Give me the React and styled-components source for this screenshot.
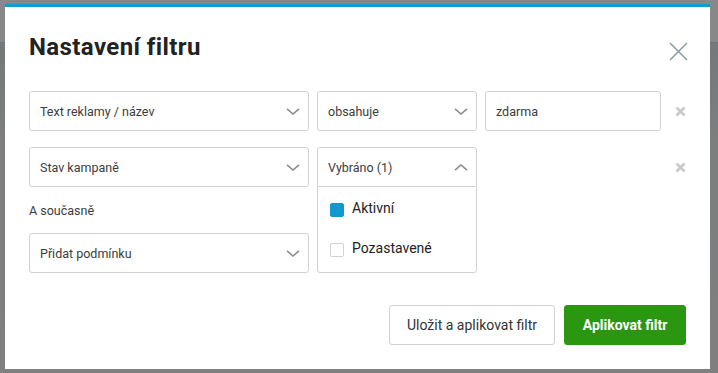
import React from 'react'
import styled, { createGlobalStyle } from 'styled-components'

const GlobalStyle = createGlobalStyle`
  html, body {
    margin: 0;
    padding: 0;
  }
  body {
    width: 718px;
    height: 373px;
    overflow: hidden;
    font-family: Roboto, "Liberation Sans", Arial, sans-serif;
    background: linear-gradient(
      to bottom,
      #888888 0px,
      #888888 42px,
      #6f7376 42px,
      #6f7376 43px,
      #75797b 43px,
      #7c7e80 140px,
      #7f7f7f 373px
    );
  }
`;

const Backdrop = styled.div`
  padding: 4px 8px 4px 5px;
  height: 373px;
  box-sizing: border-box;
`;

const Modal = styled.div`
  width: 705px;
  height: 365px;
  box-sizing: border-box;
  background: #fff;
  border-top: 3px solid #149ad0;
  padding: 0 24px;
  display: flex;
  flex-direction: column;
`;

const Header = styled.div`
  display: flex;
  justify-content: space-between;
  align-items: flex-start;
  height: 84px;
  padding-top: 26px;
  box-sizing: border-box;
`;

const Title = styled.h1`
  margin: 0;
  font-family: Roboto, "Liberation Sans", sans-serif;
  font-weight: 700;
  font-size: 24px;
  line-height: 28px;
  color: #222;
  letter-spacing: 0.4px;
`;

const CloseButton = styled.button`
  border: 0;
  background: none;
  padding: 0;
  margin: 8px -2px 0 0;
  width: 20px;
  height: 20px;
  display: flex;
  align-items: center;
  justify-content: center;
  cursor: pointer;
`;

const Rows = styled.div`
  display: flex;
  flex-direction: column;
`;

const Row = styled.div`
  display: grid;
  grid-template-columns: 280px 160px 176px 24px;
  column-gap: 8px;
  align-items: center;
  margin-bottom: ${p => p.$gap || 0}px;
`;

const Field = styled.div`
  position: relative;
  height: 40px;
  box-sizing: border-box;
  border: 1px solid #d2d2d2;
  border-radius: 3px;
  background: #fff;
  display: flex;
  align-items: center;
  justify-content: space-between;
  padding: 0 8px 0 10px;
  font-size: 12.5px;
  color: #3c3c3c;
  ${p => p.$open && `
    border-bottom-left-radius: 0;
    border-bottom-right-radius: 0;
  `}
`;

const Menu = styled.div`
  position: absolute;
  left: -1px;
  right: -1px;
  top: 38px;
  height: 87px;
  box-sizing: border-box;
  border: 1px solid #d2d2d2;
  border-radius: 0 0 3px 3px;
  background: #fff;
  padding: 12px 12px 10px;
  display: flex;
  flex-direction: column;
  gap: 22px;
  z-index: 2;
`;

const Option = styled.label`
  display: flex;
  align-items: center;
  gap: 8px;
  font-size: 14px;
  color: #222;
  line-height: 18px;
`;

const Box = styled.span`
  width: 14px;
  height: 14px;
  box-sizing: border-box;
  border-radius: 2px;
  background: ${p => (p.$checked ? '#0f99cf' : '#fff')};
  border: 1px solid ${p => (p.$checked ? '#0f99cf' : '#d2d2d2')};
  margin-top: ${p => (p.$checked ? 4 : 3)}px;
`;

const Remove = styled.span`
  display: flex;
  align-items: center;
  justify-content: flex-start;
  padding-left: 6px;
`;

const Label = styled.div`
  font-size: 12.5px;
  color: #3c3c3c;
  height: 46px;
  display: flex;
  align-items: center;
`;

const Footer = styled.div`
  margin-top: auto;
  margin-bottom: 24px;
  display: flex;
  justify-content: flex-end;
  gap: 9px;
`;

const Button = styled.button`
  height: 40px;
  box-sizing: border-box;
  border-radius: 3px;
  font-family: Roboto, "Liberation Sans", sans-serif;
  font-size: 14px;
  padding: 0 16px;
  cursor: pointer;
  border: 1px solid ${p => (p.$primary ? '#2b960f' : '#d2d2d2')};
  background: ${p => (p.$primary ? '#2b960f' : '#fff')};
  color: ${p => (p.$primary ? '#fff' : '#333')};
  font-weight: ${p => (p.$primary ? 700 : 400)};
  width: ${p => p.$w}px;
`;

const Chevron = ({ up }) => (
  <svg width="14" height="7" viewBox="0 0 14 7">
    <path
      d={up ? 'M1 6.2 L7 1 L13 6.2' : 'M1 0.8 L7 6 L13 0.8'}
      fill="none"
      stroke="#8c8c8c"
      strokeWidth="1.6"
    />
  </svg>
);

const Cross = () => (
  <svg width="11" height="11" viewBox="0 0 11 11">
    <path d="M1.5 1.5 L9.5 9.5 M9.5 1.5 L1.5 9.5" stroke="#c9c9c9" strokeWidth="2.6" />
  </svg>
);

const App = () => {
  return (
    <Backdrop>
      <GlobalStyle />
      <Modal>
        <Header>
          <Title>Nastavení filtru</Title>
          <CloseButton>
            <svg width="19" height="19" viewBox="0 0 19 19">
              <path d="M1 1 L18 18 M18 1 L1 18" stroke="#8a98a3" strokeWidth="1.5" />
            </svg>
          </CloseButton>
        </Header>
        <Rows>
          <Row $gap={16}>
            <Field>
              Text reklamy / název
              <Chevron />
            </Field>
            <Field>
              obsahuje
              <Chevron />
            </Field>
            <Field>zdarma</Field>
            <Remove>
              <Cross />
            </Remove>
          </Row>
          <Row>
            <Field>
              Stav kampaně
              <Chevron />
            </Field>
            <Field $open>
              Vybráno (1)
              <Chevron up />
              <Menu>
                <Option>
                  <Box $checked />
                  Aktivní
                </Option>
                <Option>
                  <Box />
                  Pozastavené
                </Option>
              </Menu>
            </Field>
            <div />
            <Remove>
              <Cross />
            </Remove>
          </Row>
          <Label>A současně</Label>
          <Row>
            <Field>
              Přidat podmínku
              <Chevron />
            </Field>
          </Row>
        </Rows>
        <Footer>
          <Button $w={166}>Uložit a aplikovat filtr</Button>
          <Button $primary $w={122}>Aplikovat filtr</Button>
        </Footer>
      </Modal>
    </Backdrop>
  );
};

export default App;
